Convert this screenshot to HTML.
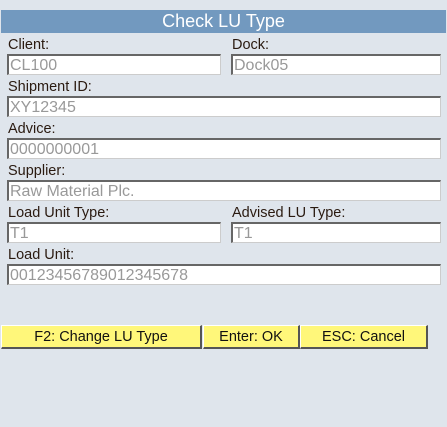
<!DOCTYPE html>
<html><head><style>
body{margin:0;width:447px;height:427px;background:#dfe5ec;font-family:"Liberation Sans",sans-serif;position:relative;overflow:hidden}
div{font-family:"Liberation Sans",sans-serif}
.h{position:absolute;left:1px;top:10px;width:445px;height:23px;background:#7299bf;color:#fff;font-size:18px;text-align:center;line-height:23px}
.l{position:absolute;font-size:14.5px;color:#2a1a10;line-height:16px}
.i{position:absolute;height:18px;background:#fff;border-top:2px solid #666;border-left:2px solid #666;border-right:1px solid #ccc;border-bottom:1px solid #ccc;color:#999;font-size:16px;line-height:19px;padding-left:1px;box-sizing:content-box}
.b{position:absolute;top:325px;height:21px;background:#fff77a;border-top:1px solid #fff;border-left:1px solid #fff;border-right:2px solid #555;border-bottom:2px solid #555;font-size:14.5px;text-align:center;line-height:22px;color:#111}
</style></head><body>
<div class="h">Check LU Type</div>
<div class="l" style="left:8px;top:37px">Client:</div>
<div class="l" style="left:232px;top:37px">Dock:</div>
<div class="i" style="left:7px;top:54px;width:210px">CL100</div>
<div class="i" style="left:231px;top:54px;width:206px">Dock05</div>
<div class="l" style="left:8px;top:79px">Shipment ID:</div>
<div class="i" style="left:7px;top:96px;width:430px">XY12345</div>
<div class="l" style="left:8px;top:121px">Advice:</div>
<div class="i" style="left:7px;top:138px;width:430px">0000000001</div>
<div class="l" style="left:8px;top:163px">Supplier:</div>
<div class="i" style="left:7px;top:180px;width:430px">Raw Material Plc.</div>
<div class="l" style="left:8px;top:205px">Load Unit Type:</div>
<div class="l" style="left:232px;top:205px">Advised LU Type:</div>
<div class="i" style="left:7px;top:222px;width:210px">T1</div>
<div class="i" style="left:231px;top:222px;width:206px">T1</div>
<div class="l" style="left:8px;top:247px">Load Unit:</div>
<div class="i" style="left:7px;top:264px;width:430px">00123456789012345678</div>
<div class="b" style="left:1px;width:198px">F2: Change LU Type</div>
<div class="b" style="left:203px;width:94px">Enter: OK</div>
<div class="b" style="left:300px;width:125px">ESC: Cancel</div>
</body></html>
